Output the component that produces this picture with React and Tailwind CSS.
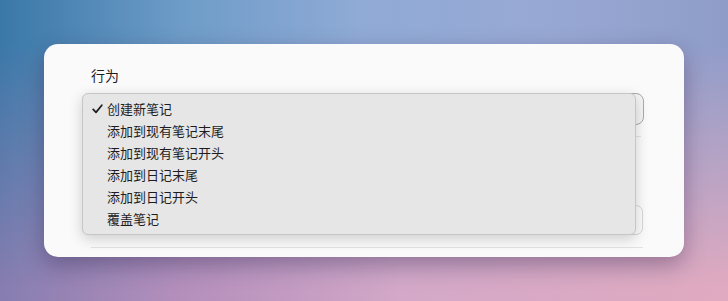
import React from "react";

const items = [
  "创建新笔记",
  "添加到现有笔记末尾",
  "添加到现有笔记开头",
  "添加到日记末尾",
  "添加到日记开头",
  "覆盖笔记",
];

export default function App() {
  return (
    <div
      className="relative w-[728px] h-[301px] overflow-hidden bg-[linear-gradient(to_right,#867db0_0%,#b48fbc_25%,#d3a8c8_55%,#e0aac0_100%)]"
      style={{ fontFamily: '"Noto Sans CJK SC", "Noto Sans", sans-serif' }}
    >
      <div className="absolute inset-0 bg-[linear-gradient(to_right,#3a78a8_0%,#6e9cc8_25%,#90abd6_50%,#98a8d4_75%,#8f9cc8_100%)] [mask-image:linear-gradient(to_bottom,black_15%,transparent_95%)]" />
      <div className="relative p-[44px]">
        <div className="h-[213px] rounded-[14px] bg-[#fafafa] shadow-[0_8px_22px_rgba(40,20,60,0.35)] pl-[38px] pr-[40px] pt-[21px]">
          <div className="pl-[9px] text-[14px] leading-[20px] text-[#1d1d1f]">行为</div>
          <div className="relative mt-[8px]">
            <div className="h-[32px] rounded-[8px] border border-[#a9a9a9] bg-[#f4f4f4]" />
            <div className="absolute left-0 top-0 z-10 w-[554px] rounded-[6px] border border-[#c6c6c6] bg-[#e6e6e6] py-[4px] shadow-[0_4px_14px_rgba(0,0,0,0.18)]">
              {items.map((t, i) => (
                <div
                  key={t}
                  className="flex h-[22px] items-center text-[13px] text-[#1d1d1f]"
                >
                  <div className="flex w-[23px] justify-end pr-[3px]">
                    {i === 0 && (
                      <svg width="11" height="10" viewBox="0 0 11 10">
                        <path
                          d="M1.2 5.4 L4 8.4 L9.8 1.2"
                          fill="none"
                          stroke="#1d1d1f"
                          strokeWidth="1.7"
                          strokeLinecap="round"
                          strokeLinejoin="round"
                        />
                      </svg>
                    )}
                  </div>
                  <span className="ml-[1px]">{t}</span>
                </div>
              ))}
            </div>
          </div>
          <div className="ml-[9px] mr-[3px] mt-[11px] h-px bg-[#e2e2e2]" />
          <div className="mt-[68px] h-[30px] rounded-[7px] border border-[#d6d6d6] bg-[#fbfbfb] mr-[1px]" />
          <div className="ml-[9px] mr-[1px] mt-[12px] h-px bg-[#e2e2e2]" />
        </div>
      </div>
    </div>
  );
}
